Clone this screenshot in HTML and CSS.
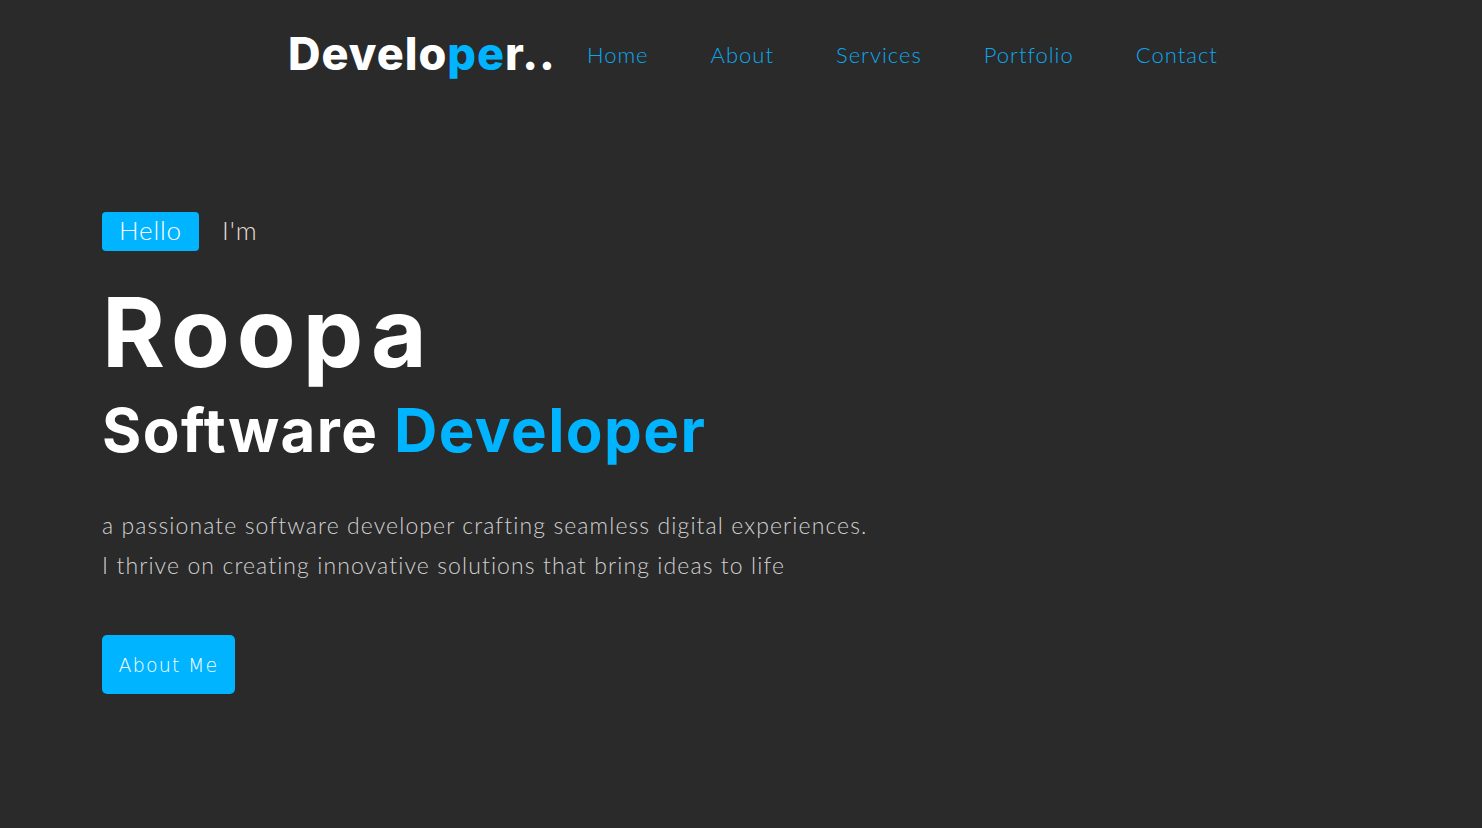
FILE: index.html
```html
<!DOCTYPE html>
<html lang="en">
<head>
<meta charset="utf-8">
<title>Developer</title>
<link rel="stylesheet" href="styles.css">
</head>
<body>
<header class="header">
  <div class="logo">Develo<span class="accent">pe</span>r..</div>
  <nav class="nav">
    <a href="#" class="nav-link">Home</a>
    <a href="#" class="nav-link">About</a>
    <a href="#" class="nav-link">Services</a>
    <a href="#" class="nav-link">Portfolio</a>
    <a href="#" class="nav-link">Contact</a>
  </nav>
</header>
<main class="hero">
  <div class="greet">
    <span class="badge">Hello</span>
    <span class="im">I'm</span>
  </div>
  <h1 class="name">Roopa</h1>
  <h2 class="role">Software <span class="accent">Developer</span></h2>
  <p class="intro">a passionate software developer crafting seamless digital experiences.<br>I thrive on creating innovative solutions that bring ideas to life</p>
  <a href="#" class="btn">About Me</a>
</main>
</body>
</html>
```
FILE: styles.css
```css
* { box-sizing: border-box; }
html, body { margin: 0; padding: 0; }
body {
  background: #2a2a2a;
  font-family: "Inter", "Liberation Sans", sans-serif;
  color: #fff;
  height: 828px;
  overflow: hidden;
}
.accent { color: #00b4ff; }
.header {
  display: flex;
  align-items: center;
  padding: 24px 0 0 288px;
  height: 84px;
}
.logo {
  font-size: 45px;
  font-weight: 800;
  line-height: 60px;
  letter-spacing: 1px;
}
.nav {
  display: flex;
  gap: 62px;
  margin-left: 31px;
}
.nav-link {
  color: #0aa8ee;
  text-decoration: none;
  font-family: "Lato", "Inter", sans-serif;
  font-size: 22px;
  font-weight: 300;
  letter-spacing: 1px;
}
.hero {
  padding: 128px 0 0 102px;
}
.greet {
  display: flex;
  align-items: center;
  gap: 23px;
}
.badge {
  background: #00b4ff;
  color: #fff;
  border-radius: 4px;
  width: 97px;
  height: 39px;
  padding-bottom: 3px;
  display: flex;
  align-items: center;
  justify-content: center;
  font-family: "Lato", "Inter", sans-serif;
  font-size: 26px;
  font-weight: 300;
  letter-spacing: 0.8px;
}
.im {
  font-family: "Lato", "Inter", sans-serif;
  font-size: 26px;
  font-weight: 300;
  letter-spacing: 1px;
  color: #e6ddd4;
  padding-bottom: 3px;
}
.name {
  margin: 26px 0 0 0;
  font-size: 96px;
  font-weight: 700;
  line-height: 110px;
  letter-spacing: 7px;
}
.role {
  margin: 5px 0 0 0;
  font-size: 60px;
  font-weight: 700;
  line-height: 76px;
  letter-spacing: 1.4px;
}
.intro {
  margin: 37px 0 0 0;
  font-family: "Lato", "Inter", sans-serif;
  font-size: 23px;
  font-weight: 300;
  line-height: 40px;
  letter-spacing: 1.1px;
  color: #d0d0d0;
}
.btn {
  display: inline-flex;
  align-items: center;
  justify-content: center;
  margin-top: 50px;
  width: 133px;
  height: 59px;
  background: #00b4ff;
  color: #fff;
  border-radius: 5px;
  text-decoration: none;
  font-family: "DejaVu Sans", sans-serif;
  font-size: 19px;
  font-weight: 300;
  letter-spacing: 1.2px;
}
```
